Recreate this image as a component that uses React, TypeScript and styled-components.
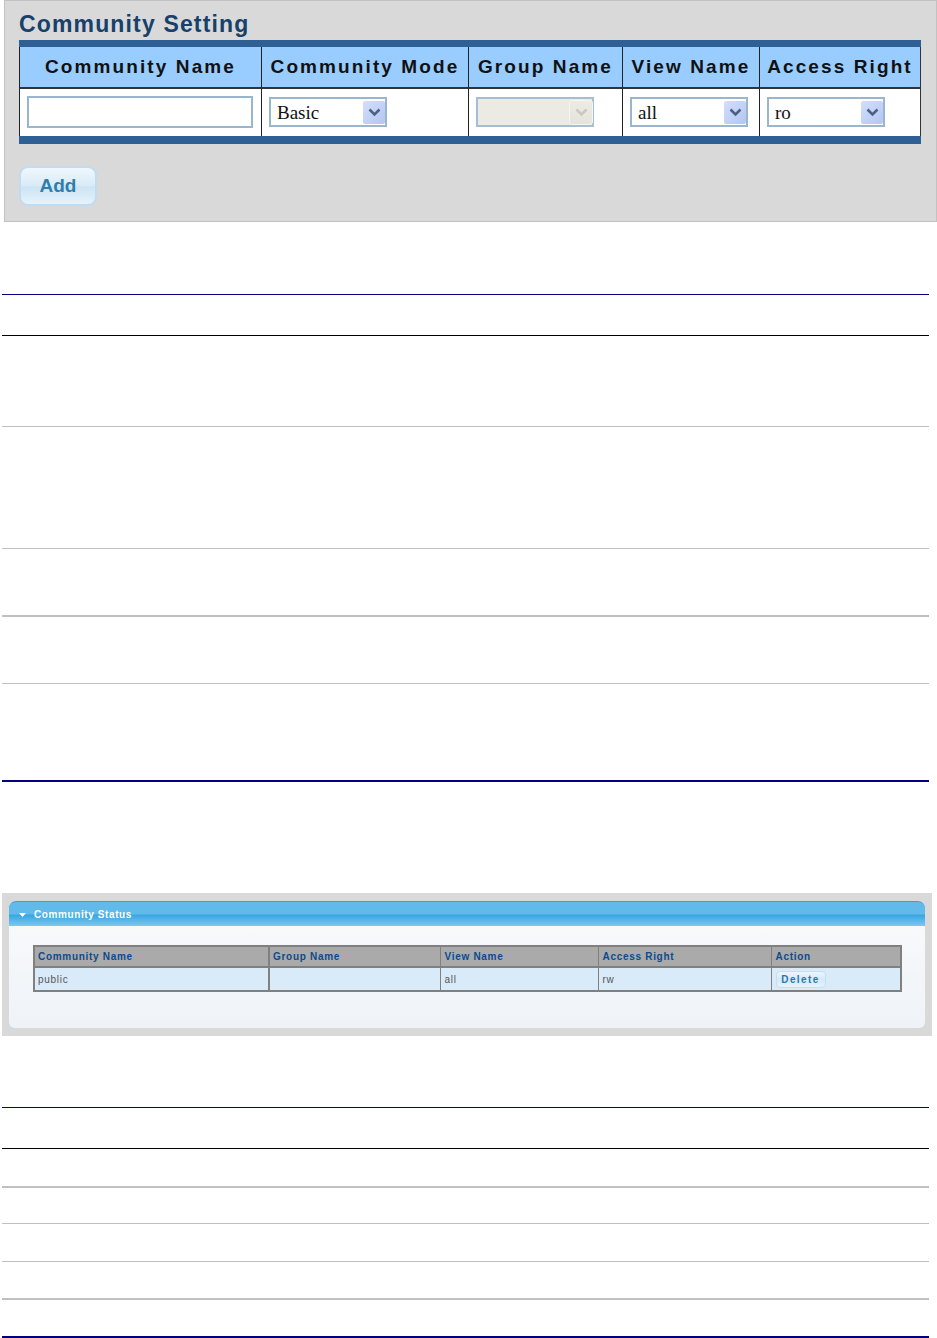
import React from "react";
import styled, { createGlobalStyle } from "styled-components";

const Global = createGlobalStyle`
  * { box-sizing: border-box; }
  html, body { margin: 0; padding: 0; background: #fff; }
  body { font-family: "Liberation Sans", Arial, sans-serif; }
`;

const Page = styled.div`
  width: 937px;
  height: 1338px;
  overflow: hidden;
  display: flex;
  flex-direction: column;
`;

/* ---------- Community Setting panel ---------- */
const SettingPanel = styled.section`
  margin-left: 4px;
  width: 933px;
  height: 222px;
  flex: none;
  background: #d9d9d9;
  border: 1px solid #c2c2c2;
  padding: 0 15px 0 14px;
`;
const SettingTitle = styled.h2`
  margin: 0;
  height: 39px;
  padding-top: 9px;
  font-size: 23px;
  line-height: 29px;
  font-weight: bold;
  letter-spacing: 1.15px;
  color: #17406b;
`;
const SettingTable = styled.table`
  width: 902px;
  table-layout: fixed;
  border-collapse: separate;
  border-spacing: 0;
  background: #fff;
  border-top: 7px solid #2f6095;
  border-bottom: 8px solid #2f6095;
`;
const SettingHead = styled.th<{ $w: number }>`
  width: ${(p) => p.$w}px;
  height: 42px;
  padding: 0;
  background: #99ccff;
  border-left: 1px solid #222;
  border-bottom: 2px solid #333;
  &:last-child { border-right: 1px solid #333; }
  font-size: 19px;
  font-weight: bold;
  letter-spacing: 2.1px;
  color: #111;
  text-align: center;
  white-space: nowrap;
  vertical-align: middle;
  overflow: hidden;
`;
const SettingCell = styled.td`
  height: 47px;
  padding: 0 0 1px 7px;
  background: #fff;
  border-left: 1px solid #222;
  &:last-child { border-right: 1px solid #333; }
  vertical-align: middle;
`;
const NameInput = styled.input`
  display: block;
  width: 226px;
  height: 32px;
  padding: 0 4px;
  background: #fff;
  border: 2px solid #9ab6cf;
  outline: none;
`;
const SelectBox = styled.div<{ $disabled?: boolean }>`
  display: flex;
  align-items: center;
  justify-content: space-between;
  width: 118px;
  height: 30px;
  padding: 0 0 0 6px;
  border: 2px solid ${(p) => (p.$disabled ? "#a7bdd2" : "#9ab6cf")};
  background: ${(p) => (p.$disabled ? "#ebebe4" : "#fff")};
  font-family: "Liberation Serif", "Times New Roman", serif;
  font-size: 19px;
  color: #111;
`;
const SelectValue = styled.span`
  padding-top: 2px;
`;
const SelectArrow = styled.span<{ $disabled?: boolean }>`
  display: flex;
  align-items: center;
  justify-content: center;
  width: 22px;
  height: 23px;
  border-radius: 2px;
  background: ${(p) =>
    p.$disabled
      ? "linear-gradient(#ecece6, #e4e4dc)"
      : "linear-gradient(135deg, #d3defa, #b3c6f3)"};
  ${(p) => p.$disabled && "outline: 1px solid #f5f5f1;"}
`;
const AddButton = styled.button`
  display: block;
  margin-top: 22px;
  width: 78px;
  height: 40px;
  border: 2px solid #bfdcf0;
  border-radius: 9px;
  padding: 0;
  background: linear-gradient(#f0f7fc 0%, #d8ebf8 50%, #cde4f5 52%, #e6f3fb 100%);
  font-family: "Liberation Sans", Arial, sans-serif;
  font-size: 19px;
  font-weight: bold;
  color: #2f7fae;
`;

/* ---------- document rule tables ---------- */
const RuleTable = styled.div<{ $top: number }>`
  margin: ${(p) => p.$top}px 0 0 2px;
  width: 927px;
  flex: none;
  border-top: 1px solid #000080;
`;
const RuleRow = styled.div<{ $h: number; $line: string; $weight?: number }>`
  height: ${(p) => p.$h}px;
  border-bottom: ${(p) => p.$weight ?? 1}px solid ${(p) => p.$line};
`;

/* ---------- Community Status panel ---------- */
const StatusFrame = styled.section`
  margin: 111px 0 0 2px;
  width: 930px;
  height: 143px;
  flex: none;
  padding: 8px 7px 7px 7px;
  background: #d9d9d9;
`;
const StatusCard = styled.div`
  height: 127px;
  border-radius: 7px 7px 6px 6px;
  background: linear-gradient(#f9fafc, #eff3f7);
`;
const StatusHeader = styled.header`
  display: flex;
  align-items: center;
  gap: 8px;
  height: 25px;
  padding: 1px 0 0 10px;
  border-top: 1px solid #3a9aec;
  border-radius: 7px 7px 0 0;
  background: linear-gradient(#62baea 0%, #62baea 50%, #36a6e2 54%, #7cc8f0 100%);
  font-size: 10px;
  font-weight: bold;
  letter-spacing: 0.6px;
  color: #fff;
`;
const StatusTable = styled.table`
  margin: 19px 0 0 24px;
  width: 867px;
  table-layout: fixed;
  border-collapse: collapse;
  border: 2px solid #808080;
`;
const StatusHead = styled.th<{ $w: number }>`
  width: ${(p) => p.$w}px;
  height: 21px;
  padding: 0 0 1px 3px;
  background: #aaaaaa;
  border-left: 1px solid #808080;
  border-bottom: 2px solid #808080;
  &:nth-child(2) { border-left-width: 2px; }
  &:nth-child(n + 3) { padding-left: 4px; }
  font-size: 10px;
  font-weight: bold;
  letter-spacing: 0.7px;
  color: #0c4a8e;
  text-align: left;
`;
const StatusCell = styled.td`
  height: 24px;
  padding: 0 0 0 3px;
  background: #d9eaf9;
  border-left: 1px solid #808080;
  &:nth-child(2) { border-left-width: 2px; }
  &:nth-child(n + 3) { padding-left: 4px; }
  font-size: 10px;
  letter-spacing: 0.7px;
  color: #555;
`;
const DeleteButton = styled.button`
  display: block;
  width: 50px;
  height: 17px;
  padding: 0;
  border: 1px solid #c3dff3;
  border-radius: 4px;
  background: linear-gradient(#eef6fc, #d5e9f8 50%, #e6f3fb);
  font-family: "Liberation Sans", Arial, sans-serif;
  font-size: 10px;
  font-weight: bold;
  letter-spacing: 1.4px;
  color: #2f78ab;
`;

const Chevron = ({ color }: { color: string }) => (
  <svg width="13" height="9" viewBox="0 0 13 9" aria-hidden="true">
    <path d="M1.5 1.5 L6.5 6.5 L11.5 1.5" fill="none" stroke={color} strokeWidth="2.6" />
  </svg>
);

const Select = ({ value, disabled }: { value?: string; disabled?: boolean }) => (
  <SelectBox $disabled={disabled}>
    <SelectValue>{value}</SelectValue>
    <SelectArrow $disabled={disabled}>
      <Chevron color={disabled ? "#c9c9c2" : "#4d6185"} />
    </SelectArrow>
  </SelectBox>
);

const firstRows: [number, string, number?][] = [
  [41, "#000"],
  [91, "#c0c0c0"],
  [122, "#c0c0c0"],
  [68, "#c0c0c0", 2],
  [67, "#c0c0c0"],
  [98, "#000080", 2],
];
const secondRows: [number, string, number?][] = [
  [41, "#000"],
  [39, "#c0c0c0", 2],
  [36, "#c0c0c0"],
  [38, "#c0c0c0"],
  [38, "#c0c0c0", 2],
  [38, "#000080", 2],
];

export default function App() {
  return (
    <Page>
      <Global />
      <SettingPanel>
        <SettingTitle>Community Setting</SettingTitle>
        <SettingTable>
          <thead>
            <tr>
              <SettingHead $w={242}>Community Name</SettingHead>
              <SettingHead $w={207}>Community Mode</SettingHead>
              <SettingHead $w={154}>Group Name</SettingHead>
              <SettingHead $w={137}>View Name</SettingHead>
              <SettingHead $w={162}>Access Right</SettingHead>
            </tr>
          </thead>
          <tbody>
            <tr>
              <SettingCell><NameInput type="text" /></SettingCell>
              <SettingCell><Select value="Basic" /></SettingCell>
              <SettingCell><Select disabled /></SettingCell>
              <SettingCell><Select value="all" /></SettingCell>
              <SettingCell><Select value="ro" /></SettingCell>
            </tr>
          </tbody>
        </SettingTable>
        <AddButton type="button">Add</AddButton>
      </SettingPanel>

      <RuleTable $top={72}>
        {firstRows.map(([h, line, weight], i) => (
          <RuleRow key={i} $h={h} $line={line} $weight={weight} />
        ))}
      </RuleTable>

      <StatusFrame>
        <StatusCard>
          <StatusHeader>
            <svg width="7" height="4" viewBox="0 0 7 4" aria-hidden="true">
              <path d="M0 0 H7 L3.5 4 Z" fill="#fff" />
            </svg>
            Community Status
          </StatusHeader>
          <StatusTable>
            <thead>
              <tr>
                <StatusHead $w={235}>Community Name</StatusHead>
                <StatusHead $w={171}>Group Name</StatusHead>
                <StatusHead $w={158}>View Name</StatusHead>
                <StatusHead $w={173}>Access Right</StatusHead>
                <StatusHead $w={130}>Action</StatusHead>
              </tr>
            </thead>
            <tbody>
              <tr>
                <StatusCell>public</StatusCell>
                <StatusCell />
                <StatusCell>all</StatusCell>
                <StatusCell>rw</StatusCell>
                <StatusCell><DeleteButton type="button">Delete</DeleteButton></StatusCell>
              </tr>
            </tbody>
          </StatusTable>
        </StatusCard>
      </StatusFrame>

      <RuleTable $top={71}>
        {secondRows.map(([h, line, weight], i) => (
          <RuleRow key={i} $h={h} $line={line} $weight={weight} />
        ))}
      </RuleTable>
    </Page>
  );
}
